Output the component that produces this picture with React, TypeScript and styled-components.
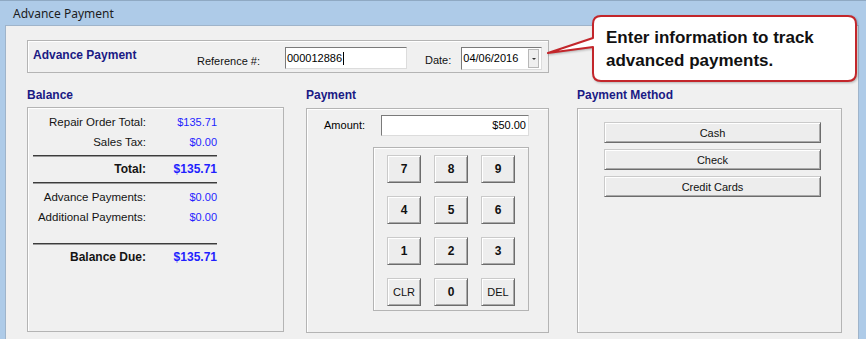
import { Fragment } from "react";
import styled, { createGlobalStyle } from "styled-components";

const GlobalStyle = createGlobalStyle`
  html, body { margin: 0; padding: 0; background: #f0f0f0; }
  body { font-family: "Liberation Sans", Arial, sans-serif; font-size: 11px; color: #000; }
  * { box-sizing: border-box; }
`;

const Window = styled.div`
  position: relative;
  width: 866px;
  height: 339px;
  overflow: hidden;
  background: #aecbe8;
  border-top: 1px solid #8fa9c3;
  display: flex;
  flex-direction: column;
  padding: 0 7px 0 5px;
`;

const TitleBar = styled.div`
  height: 24px;
  display: flex;
  align-items: center;
  padding-left: 8px;
  font: 12px "Noto Sans", "Liberation Sans", sans-serif;
  color: #1c1c1c;
`;

const Client = styled.div`
  flex: 1;
  background: #f0f0f0;
  border: 1px solid #9fb4ca;
  border-bottom: none;
  padding: 14px 0 0 21px;
`;

const GroupBox = styled.div`
  width: 522px;
  height: 33px;
  border: 1px solid #b4b4b4;
  box-shadow: inset 1px 1px #fff;
  display: flex;
  align-items: flex-start;
  padding: 6px 0 0 5px;
`;

const GroupTitle = styled.div`
  width: 164px;
  padding-top: 1px;
  font: bold 12px/14px "Liberation Sans", Arial, sans-serif;
  color: #1a1a84;
`;

const FieldLabel = styled.label<{ $top: number; $gap?: number }>`
  margin-top: ${(p) => p.$top}px;
  margin-left: ${(p) => p.$gap ?? 0}px;
  line-height: 13px;
  color: #111;
`;

const TextBox = styled.div<{ $width: number; $height: number; $gap: number; $right?: boolean }>`
  width: ${(p) => p.$width}px;
  height: ${(p) => p.$height}px;
  margin-left: ${(p) => p.$gap}px;
  background: #fff;
  border: 1px solid;
  border-color: #7a7a7a #dcdcdc #dcdcdc #7a7a7a;
  display: flex;
  align-items: center;
  justify-content: ${(p) => (p.$right ? "flex-end" : "flex-start")};
  padding: 0 2px 0 1px;
  line-height: 13px;
`;

const Caret = styled.span`
  display: inline-block;
  width: 1px;
  height: 13px;
  background: #000;
  margin-left: 1px;
`;

const DropButton = styled.span`
  margin-left: auto;
  width: 11px;
  height: 19px;
  border: 1px solid #b8b8b8;
  background: #efefef;
  display: flex;
  align-items: center;
  justify-content: center;
  &::after {
    content: "";
    border-left: 2px solid transparent;
    border-right: 2px solid transparent;
    border-top: 2px solid #333;
  }
`;

const Columns = styled.div`
  display: flex;
  gap: 22px;
  margin-top: 15px;
`;

const Section = styled.section<{ $width: number; $shift?: number }>`
  width: ${(p) => p.$width}px;
  margin-left: ${(p) => p.$shift ?? 0}px;
  display: flex;
  flex-direction: column;
`;

const SectionTitle = styled.h2`
  margin: 0;
  height: 14px;
  font: bold 12px/14px "Liberation Sans", Arial, sans-serif;
  color: #1a1a84;
`;

const Panel = styled.div<{ $top: number }>`
  margin-top: ${(p) => p.$top}px;
  height: 225px;
  border: 1px solid #b4b4b4;
  box-shadow: inset 1px 1px #fff;
`;

const Ledger = styled.div`
  display: grid;
  grid-template-columns: 113px 71px;
  padding: 4px 0 0 5px;
`;

const LedgerCell = styled.div<{ $value?: boolean; $strong?: boolean }>`
  height: 20px;
  line-height: 20px;
  text-align: right;
  white-space: nowrap;
  color: ${(p) => (p.$value ? "#1f1fff" : "#141414")};
  font-weight: ${(p) => (p.$strong ? "bold" : "normal")};
  font-size: ${(p) => (p.$strong ? "12px" : p.$value ? "11px" : "11.5px")};
`;

const Rule = styled.div<{ $above: number; $below: number }>`
  grid-column: 1 / -1;
  height: 2px;
  margin: ${(p) => p.$above}px 0 ${(p) => p.$below}px;
  border-top: 1px solid #3c3c3c;
  border-bottom: 1px solid #9a9a9a;
`;

const AmountRow = styled.div`
  display: flex;
  align-items: flex-start;
  padding-top: 6px;
`;

const AmountLabel = styled.label`
  width: 58px;
  text-align: right;
  line-height: 13px;
  margin-top: 4px;
`;

const Keypad = styled.div`
  width: 156px;
  height: 164px;
  margin: 11px 0 0 66px;
  border: 1px solid #b4b4b4;
  box-shadow: inset 1px 1px #fff;
  display: grid;
  grid-template-columns: repeat(3, 34px);
  grid-auto-rows: 28px;
  gap: 13px;
  padding: 7px 0 0 13px;
`;

const PushButton = styled.button<{ $bold?: boolean }>`
  margin: 0;
  padding: 0;
  background: #ededed;
  border: 1px solid;
  border-color: #cacaca #6c6c6c #6c6c6c #cacaca;
  box-shadow: inset 1px 1px #fff, inset -1px -1px #a9a9a9;
  font-family: ${(p) =>
    p.$bold ? '"Liberation Sans Narrow", "Liberation Sans", Arial, sans-serif' : '"Liberation Sans", Arial, sans-serif'};
  font-size: ${(p) => (p.$bold ? "12px" : "11px")};
  font-weight: ${(p) => (p.$bold ? "bold" : "normal")};
  color: #111;
  cursor: pointer;
`;

const MethodList = styled.div`
  display: flex;
  flex-direction: column;
  gap: 6px;
  padding: 13px 0 0 26px;
`;

const MethodButton = styled(PushButton)`
  width: 217px;
  height: 21px;
`;

const Callout = styled.div`
  position: absolute;
  left: 546px;
  top: 13px;
  width: 314px;
  height: 72px;
`;

const CalloutShape = styled.svg`
  position: absolute;
  left: 0;
  top: 0;
  filter: drop-shadow(1px 1px 1px rgba(0, 0, 0, 0.25));
`;

const CalloutText = styled.p`
  position: relative;
  margin: 0;
  padding: 12px 0 0 60px;
  font: bold 17px/23px "Liberation Sans", Arial, sans-serif;
  color: #111;
`;

const ledger = [
  { label: "Repair Order Total:", value: "$135.71" },
  { label: "Sales Tax:", value: "$0.00" },
];
const payments = [
  { label: "Advance Payments:", value: "$0.00" },
  { label: "Additional Payments:", value: "$0.00" },
];
const keys = ["7", "8", "9", "4", "5", "6", "1", "2", "3", "CLR", "0", "DEL"];
const methods = ["Cash", "Check", "Credit Cards"];

export default function App() {
  return (
    <>
      <GlobalStyle />
      <Window>
        <TitleBar>Advance Payment</TitleBar>
        <Client>
          <GroupBox>
            <GroupTitle>Advance Payment</GroupTitle>
            <FieldLabel $top={8}>Reference #:</FieldLabel>
            <TextBox $width={122} $height={22} $gap={25}>
              000012886
              <Caret />
            </TextBox>
            <FieldLabel $top={7} $gap={18}>
              Date:
            </FieldLabel>
            <TextBox $width={81} $height={23} $gap={10}>
              04/06/2016
              <DropButton />
            </TextBox>
          </GroupBox>

          <Columns>
            <Section $width={257}>
              <SectionTitle>Balance</SectionTitle>
              <Panel $top={5}>
                <Ledger>
                  {ledger.map((r) => (
                    <Fragment key={r.label}>
                      <LedgerCell>{r.label}</LedgerCell>
                      <LedgerCell $value>{r.value}</LedgerCell>
                    </Fragment>
                  ))}
                  <Rule $above={3} $below={2} />
                  <LedgerCell $strong>Total:</LedgerCell>
                  <LedgerCell $value $strong>
                    $135.71
                  </LedgerCell>
                  <Rule $above={3} $below={3} />
                  {payments.map((r) => (
                    <Fragment key={r.label}>
                      <LedgerCell>{r.label}</LedgerCell>
                      <LedgerCell $value>{r.value}</LedgerCell>
                    </Fragment>
                  ))}
                  <Rule $above={16} $below={2} />
                  <LedgerCell $strong>Balance Due:</LedgerCell>
                  <LedgerCell $value $strong>
                    $135.71
                  </LedgerCell>
                </Ledger>
              </Panel>
            </Section>

            <Section $width={243}>
              <SectionTitle>Payment</SectionTitle>
              <Panel $top={6}>
                <AmountRow>
                  <AmountLabel>Amount:</AmountLabel>
                  <TextBox $width={148} $height={21} $gap={16} $right>
                    $50.00
                  </TextBox>
                </AmountRow>
                <Keypad>
                  {keys.map((k) => (
                    <PushButton key={k} $bold={k.length === 1}>
                      {k}
                    </PushButton>
                  ))}
                </Keypad>
              </Panel>
            </Section>

            <Section $width={265} $shift={6}>
              <SectionTitle>Payment Method</SectionTitle>
              <Panel $top={6}>
                <MethodList>
                  {methods.map((m) => (
                    <MethodButton key={m}>{m}</MethodButton>
                  ))}
                </MethodList>
              </Panel>
            </Section>
          </Columns>
        </Client>

        <Callout>
          <CalloutShape width="314" height="72" viewBox="0 0 314 72">
            <path
              d="M55 2 H302 Q310 2 310 10 V59 Q310 67 302 67 H55 Q47 67 47 59 V33 L2 39 L47 24 V10 Q47 2 55 2 Z"
              fill="#fff"
              stroke="#c3262b"
              strokeWidth="2"
              strokeLinejoin="round"
            />
          </CalloutShape>
          <CalloutText>
            Enter information to track
            <br />
            advanced payments.
          </CalloutText>
        </Callout>
      </Window>
    </>
  );
}
